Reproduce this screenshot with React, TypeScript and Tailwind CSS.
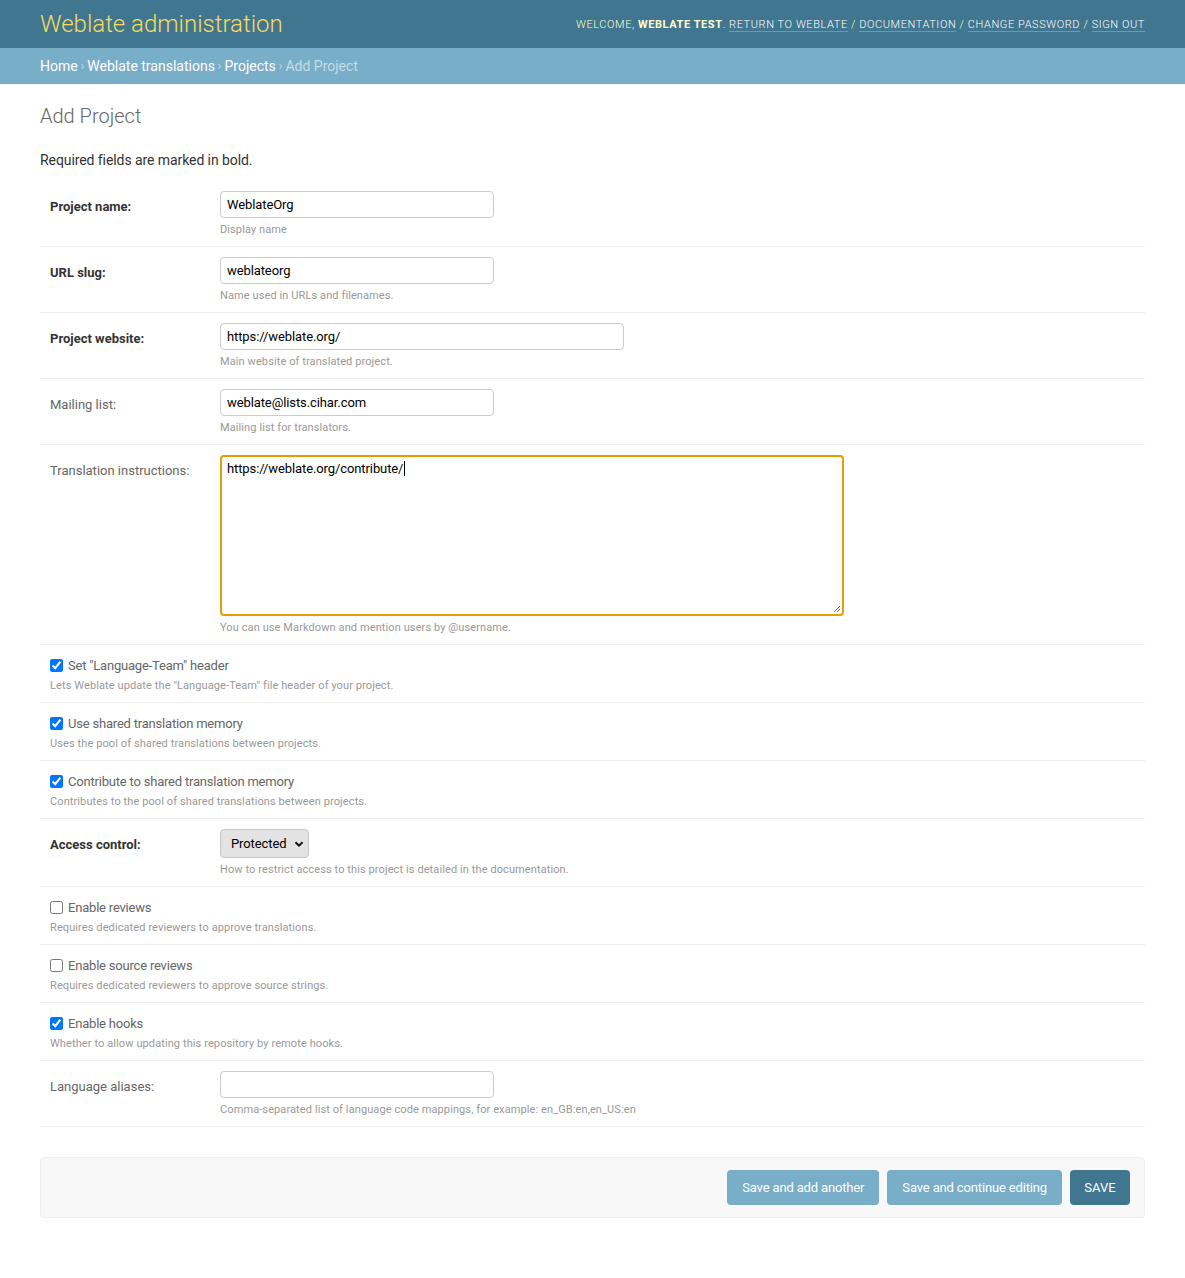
import React from "react";

const FONT = { fontFamily: "Roboto, 'Noto Sans', 'Liberation Sans', sans-serif" };

function Row({ children }: { children: React.ReactNode }) {
  return <div className="border-b border-[#eee] p-[10px]">{children}</div>;
}

function Help({
  children,
  indent = true,
  top = "mt-[5px]",
}: {
  children: React.ReactNode;
  indent?: boolean;
  top?: string;
}) {
  return (
    <div
      className={`${top} text-[11px] leading-[13px] tracking-[0.1px] text-[#999] ${indent ? "ml-[170px]" : ""}`}
    >
      {children}
    </div>
  );
}

function FieldLabel({ text, required }: { text: string; required?: boolean }) {
  return (
    <div
      className={`w-[170px] shrink-0 pt-[9px] pr-[10px] text-[13px] leading-[13px] ${
        required ? "font-bold text-[#333]" : "text-[#666]"
      }`}
    >
      {text}
    </div>
  );
}

function TextRow({
  label,
  value,
  help,
  width,
  required,
}: {
  label: string;
  value: string;
  help: string;
  width: string;
  required?: boolean;
}) {
  return (
    <Row>
      <div className="flex">
        <FieldLabel text={label} required={required} />
        <input
          readOnly
          defaultValue={value}
          className={`h-[27px] ${width} rounded-[4px] border border-[#ccc] bg-white px-[6px] text-[13px] tracking-[-0.1px] text-black outline-none`}
          style={FONT}
        />
      </div>
      <Help>{help}</Help>
    </Row>
  );
}

function CheckRow({ label, help, checked }: { label: string; help: string; checked: boolean }) {
  return (
    <Row>
      <label className="mt-[1px] flex h-[19px] items-center gap-[5px] text-[13px] tracking-[-0.2px] text-[#666]">
        <input type="checkbox" defaultChecked={checked} className="m-0 h-[13px] w-[13px]" />
        <span>{label}</span>
      </label>
      <Help indent={false} top="mt-[4px]">
        {help}
      </Help>
    </Row>
  );
}

export default function App() {
  return (
    <div className="min-h-screen bg-white text-[#333]" style={FONT}>
      {/* header bar */}
      <div className="flex h-[48px] items-center justify-between bg-[#417690] px-10">
        <div className="text-[24px] font-light leading-[28px] text-[#f5dd5d]">Weblate administration</div>
        <div className="mt-[2px] text-[11px] font-light uppercase tracking-[0.58px] text-[#ffc]">
          Welcome, <strong className="font-bold">Weblate test</strong>.{" "}
          <a className="border-b border-white/25 text-white">Return to Weblate</a> /{" "}
          <a className="border-b border-white/25 text-white">Documentation</a> /{" "}
          <a className="border-b border-white/25 text-white">Change password</a> /{" "}
          <a className="border-b border-white/25 text-white">Sign out</a>
        </div>
      </div>

      {/* breadcrumbs */}
      <div className="flex h-[36px] items-center bg-[#79aec8] px-10 text-[14px] text-[#c4dce8]">
        <a className="text-white">Home</a>
        <span className="mx-[3px] text-[12px]">›</span>
        <a className="text-white">Weblate translations</a>
        <span className="mx-[3px] text-[12px]">›</span>
        <a className="text-white">Projects</a>
        <span className="mx-[3px] text-[12px]">›</span>
        <span>Add Project</span>
      </div>

      <div className="px-10 pt-5">
        <h1 className="mb-[23px] text-[20px] font-light leading-[24px] text-[#666]">Add Project</h1>
        <p className="mb-[12px] text-[14px] leading-[18px] tracking-[-0.08px] text-[#333]">
          Required fields are marked in bold.
        </p>

        <div>
          <TextRow label="Project name:" value="WeblateOrg" help="Display name" width="w-[274px]" required />
          <TextRow
            label="URL slug:"
            value="weblateorg"
            help="Name used in URLs and filenames."
            width="w-[274px]"
            required
          />
          <TextRow
            label="Project website:"
            value="https://weblate.org/"
            help="Main website of translated project."
            width="w-[404px]"
            required
          />
          <TextRow
            label="Mailing list:"
            value="weblate@lists.cihar.com"
            help="Mailing list for translators."
            width="w-[274px]"
          />

          <Row>
            <div className="flex">
              <FieldLabel text="Translation instructions:" />
              <div className="relative h-[161px] w-[624px] rounded-[4px] border-2 border-[#e99c00] bg-white px-[5px] pt-[1px] text-[13px] leading-[16px] tracking-[-0.1px] text-black">
                https://weblate.org/contribute/
                <span className="ml-[1px] inline-block h-[15px] w-px translate-y-[3px] bg-black" />
                <svg className="absolute bottom-[1px] right-[1px]" width="9" height="9" viewBox="0 0 9 9">
                  <path d="M8 2 L2 8 M8 5 L5 8" stroke="#777" strokeWidth="1" />
                </svg>
              </div>
            </div>
            <Help>You can use Markdown and mention users by @username.</Help>
          </Row>

          <CheckRow
            label={'Set "Language-Team" header'}
            help={'Lets Weblate update the "Language-Team" file header of your project.'}
            checked
          />
          <CheckRow
            label="Use shared translation memory"
            help="Uses the pool of shared translations between projects."
            checked
          />
          <CheckRow
            label="Contribute to shared translation memory"
            help="Contributes to the pool of shared translations between projects."
            checked
          />

          <Row>
            <div className="flex">
              <FieldLabel text="Access control:" required />
              <div className="flex h-[29px] w-[89px] items-center justify-between rounded-[4px] border border-[#c6c6c6] bg-[#e3e3e3] pl-[10px] pr-[4px] text-[13px] tracking-[-0.1px] text-black">
                <span>Protected</span>
                <svg width="10" height="10" viewBox="0 0 10 10">
                  <path d="M1.5 3.2 L5 6.7 L8.5 3.2" fill="none" stroke="#111" strokeWidth="2" />
                </svg>
              </div>
            </div>
            <Help>How to restrict access to this project is detailed in the documentation.</Help>
          </Row>

          <CheckRow
            label="Enable reviews"
            help="Requires dedicated reviewers to approve translations."
            checked={false}
          />
          <CheckRow
            label="Enable source reviews"
            help="Requires dedicated reviewers to approve source strings."
            checked={false}
          />
          <CheckRow
            label="Enable hooks"
            help="Whether to allow updating this repository by remote hooks."
            checked
          />

          <TextRow
            label="Language aliases:"
            value=""
            help="Comma-separated list of language code mappings, for example: en_GB:en,en_US:en"
            width="w-[274px]"
          />
        </div>

        {/* submit row */}
        <div className="mt-[30px] flex justify-end gap-[8px] rounded-[4px] border border-[#eee] bg-[#f8f8f8] px-[14px] py-[12px]">
          <button className="h-[35px] rounded-[4px] bg-[#79aec8] px-[15px] text-[13px] tracking-[-0.15px] text-white">
            Save and add another
          </button>
          <button className="h-[35px] rounded-[4px] bg-[#79aec8] px-[15px] text-[13px] tracking-[-0.15px] text-white">
            Save and continue editing
          </button>
          <button className="h-[35px] w-[60px] rounded-[4px] bg-[#417690] text-[13px] text-white">SAVE</button>
        </div>
      </div>
    </div>
  );
}
